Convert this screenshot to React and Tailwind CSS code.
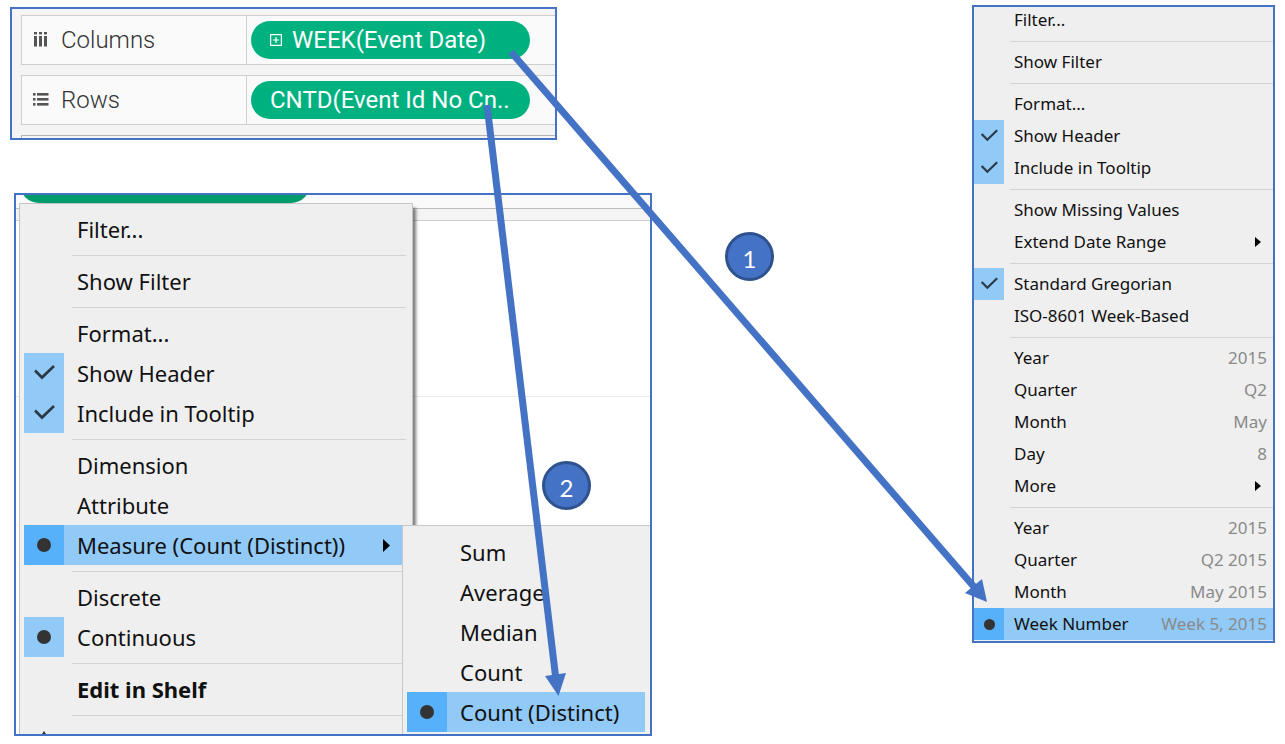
import React from "react";

const SIZES = {
  lg: {
    row: "h-10 text-[22px]",
    mark: "w-10",
    label: "pl-[13px]",
    sep: "h-3 pl-12",
    check: "size-[22px]",
    dot: "size-[14px]",
    arrow: "mr-3 h-[13px] w-[7px]",
  },
  sm: {
    row: "h-8 text-[17px]",
    mark: "w-[30px]",
    label: "pl-[10px]",
    sep: "h-[10px] pl-9",
    check: "size-[18px]",
    dot: "size-[11px]",
    arrow: "mr-3 h-[10px] w-[6px]",
  },
};

function Check({ className }) {
  return (
    <svg viewBox="0 0 22 22" className={className} fill="none" stroke="#2b3a47" strokeWidth="2.7" aria-hidden="true">
      <path d="M2 8.5 L9 15.5 L21 4" />
    </svg>
  );
}

function Separator({ size }) {
  return (
    <div role="separator" className={`flex items-center ${SIZES[size].sep}`}>
      <div className="h-px w-full bg-[#d3d3d3]" />
    </div>
  );
}

function MenuItem({ size, label, mark, value, submenu, active, bold }) {
  const s = SIZES[size];
  return (
    <button
      type="button"
      role="menuitem"
      className={`flex w-full shrink-0 items-center text-left whitespace-nowrap text-[#111] ${s.row} ${active ? "bg-[#91c9f7]" : ""} ${bold ? "font-bold" : ""}`}
    >
      <span
        className={`flex h-full shrink-0 items-center justify-center ${s.mark} ${mark ? (active ? "bg-[#56b0fa]" : "bg-[#91c9f7]") : ""}`}
      >
        {mark === "check" && <Check className={s.check} />}
        {mark === "dot" && <span className={`rounded-full bg-[#333] ${s.dot}`} />}
      </span>
      <span className={`grow ${s.label}`}>{label}</span>
      {value && <span className="pr-[6px] text-[#8a8a8a]">{value}</span>}
      {submenu && (
        <svg viewBox="0 0 7 13" preserveAspectRatio="none" className={s.arrow} aria-hidden="true">
          <path d="M0 0 L7 6.5 L0 13 Z" fill="#000" />
        </svg>
      )}
    </button>
  );
}

function Menu({ size, entries }) {
  return entries.map((e, i) =>
    e === "-" ? <Separator key={i} size={size} /> : <MenuItem key={i} size={size} {...e} />
  );
}

const measureMenu = [
  { label: "Filter..." },
  "-",
  { label: "Show Filter" },
  "-",
  { label: "Format..." },
  { label: "Show Header", mark: "check" },
  { label: "Include in Tooltip", mark: "check" },
  "-",
  { label: "Dimension" },
  { label: "Attribute" },
];

const measureMenuEnd = [
  "-",
  { label: "Discrete" },
  { label: "Continuous", mark: "dot" },
  "-",
  { label: "Edit in Shelf", bold: true },
  "-",
];

const aggregations = [
  { label: "Sum" },
  { label: "Average" },
  { label: "Median" },
  { label: "Count" },
  { label: "Count (Distinct)", mark: "dot", active: true },
];

const dateMenu = [
  { label: "Filter..." },
  "-",
  { label: "Show Filter" },
  "-",
  { label: "Format..." },
  { label: "Show Header", mark: "check" },
  { label: "Include in Tooltip", mark: "check" },
  "-",
  { label: "Show Missing Values" },
  { label: "Extend Date Range", submenu: true },
  "-",
  { label: "Standard Gregorian", mark: "check" },
  { label: "ISO-8601 Week-Based" },
  "-",
  { label: "Year", value: "2015" },
  { label: "Quarter", value: "Q2" },
  { label: "Month", value: "May" },
  { label: "Day", value: "8" },
  { label: "More", submenu: true },
  "-",
  { label: "Year", value: "2015" },
  { label: "Quarter", value: "Q2 2015" },
  { label: "Month", value: "May 2015" },
  { label: "Week Number", value: "Week 5, 2015", mark: "dot", active: true },
];

function ColumnsIcon() {
  return (
    <svg viewBox="0 0 16 16" className="size-4" fill="#555" aria-hidden="true">
      {[1, 6, 11].map((x) => (
        <g key={x}>
          <rect x={x} y="0" width="3" height="2.4" />
          <rect x={x} y="4" width="3" height="10.5" />
        </g>
      ))}
    </svg>
  );
}

function RowsIcon() {
  return (
    <svg viewBox="0 0 16 16" className="size-4" fill="#555" aria-hidden="true">
      {[1, 6, 11].map((y) => (
        <g key={y}>
          <rect x="0" y={y} width="2.5" height="2.6" />
          <rect x="4" y={y} width="11.5" height="2.6" />
        </g>
      ))}
    </svg>
  );
}

function Shelf({ icon, name, children }) {
  return (
    <div className="flex h-[50px] shrink-0 border-y border-l border-[#cfcfcf] bg-[#fafafa]">
      <div className="flex w-[225px] shrink-0 items-center gap-3 border-r border-[#cfcfcf] pl-[11px] text-2xl font-light text-[#333]">
        {icon}
        <span>{name}</span>
      </div>
      <div className="flex grow items-center pr-[25px] pl-1">{children}</div>
    </div>
  );
}

function Pill({ children }) {
  return (
    <button
      type="button"
      className="flex h-[38px] w-full items-center gap-2 rounded-full bg-[#00b180] pl-[19px] text-2xl whitespace-nowrap text-white"
    >
      {children}
    </button>
  );
}

function Badge({ className, children }) {
  return (
    <div
      className={`absolute flex size-[49px] items-center justify-center rounded-full border-[3px] border-[#2f528f] bg-[#4472c4] pt-1 font-[Lato,sans-serif] text-2xl text-white ${className}`}
    >
      {children}
    </div>
  );
}

export default function App() {
  return (
    <main className="relative flex min-h-screen items-start justify-between gap-4 bg-white pt-[5px] pr-[10px] pl-[10px] pb-2 font-['Noto_Sans',sans-serif]">
      <div className="flex flex-col gap-[53px] pt-[2px]">
        <section className="flex h-[133px] w-[547px] flex-col gap-[10px] overflow-hidden border-2 border-[#4472c4] bg-[#f4f4f4] pt-[6px] pl-[9px] font-[Roboto,sans-serif]">
          <Shelf icon={<ColumnsIcon />} name="Columns">
            <Pill>
              <svg viewBox="0 0 12 12" className="mr-[2px] size-3" fill="none" stroke="#fff" strokeWidth="1.2" aria-hidden="true">
                <path d="M0.6 0.6h10.8v10.8H0.6zM6 3v6M3 6h6" />
              </svg>
              <span>WEEK(Event Date)</span>
            </Pill>
          </Shelf>
          <Shelf icon={<RowsIcon />} name="Rows">
            <Pill>CNTD(Event Id No Cn..</Pill>
          </Shelf>
          <div className="h-3 shrink-0 border-t border-l border-[#b5b5b5]" />
        </section>

        <section className="relative ml-1 flex h-[543px] w-[638px] flex-col overflow-hidden border-2 border-[#4472c4] bg-white">
          <div className="flex h-[14px] shrink-0 items-end border-b border-[#bdbdbd] bg-[#fafafa] pb-[5px] pl-1">
            <div className="h-[38px] w-[290px] shrink-0 rounded-full bg-[#009b6b]" />
          </div>
          <div className="h-3 shrink-0 border-b border-[#cfcfcf] bg-[#f4f4f4]" />
          <div className="h-[176px] shrink-0 border-b border-[#ebebeb]" />

          <div
            role="menu"
            aria-label="Measure options"
            className="absolute top-[8px] left-[3px] w-[394px] border border-[#c4c4c4] bg-[#efefef] pt-[5px] pr-[6px] pl-1 shadow-[3px_5px_3px_rgba(0,0,0,0.5)]"
          >
            <Menu size="lg" entries={measureMenu} />
            <div className="relative">
              <div className="pr-1">
                <MenuItem size="lg" label="Measure (Count (Distinct))" mark="dot" active submenu />
              </div>
              <div
                role="menu"
                aria-label="Aggregation"
                className="absolute top-0 left-[378px] z-10 w-[260px] border border-[#c8c8c8] bg-[#efefef] pt-[6px] pr-[16px] pb-10 pl-1"
              >
                <Menu size="lg" entries={aggregations} />
              </div>
            </div>
            <Menu size="lg" entries={measureMenuEnd} />
            <div className="flex h-10 w-10 justify-center pt-[10px]">
              <svg viewBox="0 0 16 12" className="h-3 w-4" fill="#333" aria-hidden="true">
                <path d="M8 0 L16 12 H0 Z" />
              </svg>
            </div>
          </div>
        </section>
      </div>

      <section
        role="menu"
        aria-label="Date options"
        className="w-[303px] shrink-0 overflow-hidden border-2 border-[#4472c4] bg-[#efefef] pb-px"
      >
        <div className="-mt-[3px]">
          <Menu size="sm" entries={dateMenu} />
        </div>
      </section>

      <svg viewBox="0 0 1285 744" className="pointer-events-none absolute top-0 left-0 z-20 w-[1285px]" aria-hidden="true">
        <g stroke="#4472c4" strokeWidth="7" fill="#4472c4">
          <path d="M511 52 L975 588" />
          <path d="M487 105 L556 680" />
          <g stroke="none">
            <path d="M987 602 L965 593 L982 579 Z" />
            <path d="M558.5 696 L545 676 L566 673 Z" />
          </g>
        </g>
      </svg>
      <Badge className="top-[232px] left-[725px] z-20">1</Badge>
      <Badge className="top-[461px] left-[542px] z-20">2</Badge>
    </main>
  );
}
